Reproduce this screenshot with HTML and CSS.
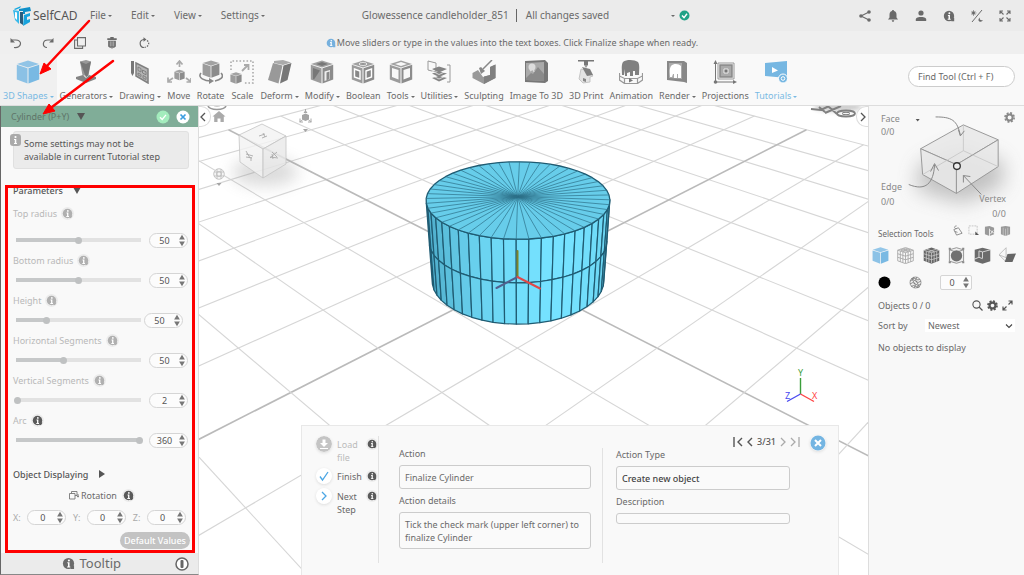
FILE: index.html
```html
<!DOCTYPE html>
<html lang="en">
<head>
<meta charset="utf-8">
<meta name="viewport" content="width=device-width, initial-scale=1">
<title>SelfCAD</title>
<link rel="stylesheet" href="styles.css">
</head>
<body>
<svg class="defs" aria-hidden="true">
  <symbol id="info" viewBox="0 0 10 10"><circle cx="5" cy="5" r="4.3" fill="currentColor"/><path d="M6 6.5h3.3v2.8H7z" fill="currentColor"/><circle cx="5.3" cy="2.7" r=".8" fill="#fff"/><path d="M4.1 4.1h1.7v3.2h.6v.8H3.9v-.8h.7V4.9h-.5z" fill="#fff"/></symbol>
  <symbol id="cube" viewBox="0 0 24 24"><path d="M12 .5 23 4 12 7.5 1 4z" fill="currentColor" opacity=".8"/><path d="M.8 4.8 11.5 8.2V23.5L.8 19.5z" fill="currentColor" opacity=".85"/><path d="M23.2 4.8 12.5 8.2V23.5l10.7-4z" fill="currentColor"/></symbol>
  <symbol id="spin" viewBox="0 0 6 13"><path d="M3 .8 5.900 5.500H.1zM3 12.200.1 7.500h5.800z" fill="#777"/></symbol>
</svg>
<div class="app">
  <header class="topbar">
    <div class="topbar-left">
      <a class="brand" href="#">
        <svg width="20" height="20" viewBox="0 0 20 20"><path d="M2 3 9 0 8 2 3 4z" fill="#1aa9e0"/><path d="M1 4 7 5 7 18 3 14z" fill="#39b9ea"/><path d="M3 6l2 .5V14l-2-2z" fill="#fff"/><path d="M7 3 18 1 19 5 13 6 13 8 11 8v-3L7 5z" fill="#0f8fc8"/><path d="M8 6h3v13l-3-2z" fill="#2a5d7d"/><path d="M12 9 18 7v3l-3 1v3l3-1v3l-7 4z" fill="#17a3dd"/></svg>
        <span>SelfCAD</span>
      </a>
      <nav class="menu">
        <button class="caret">File</button><button class="caret">Edit</button><button class="caret">View</button><button class="caret">Settings</button>
      </nav>
    </div>
    <div class="project">
      <span class="project-name">Glowessence candleholder_851</span>
      <span class="project-state">All changes saved</span>
      <button class="caret" aria-label="Save options"></button>
      <svg width="11" height="11" viewBox="0 0 11 11"><circle cx="5.500" cy="5.500" r="5" fill="#1fa287"/><path d="m3 5.600 2 2 3-3.800" fill="none" stroke="#fff" stroke-width="1.400"/></svg>
    </div>
    <div class="top-icons">
      <button aria-label="Share"><svg viewBox="0 0 12 12"><path d="M10 2 2 6l8 4" fill="none" stroke="currentColor" stroke-width="1.100"/><circle cx="10" cy="2" r="1.800" fill="currentColor"/><circle cx="2" cy="6" r="1.800" fill="currentColor"/><circle cx="10" cy="10" r="1.800" fill="currentColor"/></svg></button>
      <button aria-label="Notifications"><svg viewBox="0 0 12 12"><path d="M6 0c.7 0 1 .5 1 1 2 .5 2.500 2 2.500 4v2.500L11 9.500H1l1.500-2V5c0-2 .5-3.500 2.500-4 0-.5.300-1 1-1zM4.800 10.200h2.400c0 2-2.400 2-2.400 0z" fill="currentColor"/></svg></button>
      <button aria-label="Account"><svg viewBox="0 0 12 12"><circle cx="6" cy="3" r="2.600" fill="currentColor"/><path d="M.8 11V9.500C.8 7.500 4 7 6 7s5.200.5 5.200 2.500V11z" fill="currentColor"/></svg></button>
      <button aria-label="About"><svg><use href="#info"/></svg></button>
      <button aria-label="Theme"><svg viewBox="0 0 12 12"><path d="M11 0 1 12" stroke="currentColor" stroke-width="1"/><circle cx="2.500" cy="3" r="1.400" fill="currentColor"/><path d="M2.500 0v6M-.5 3h6M.4.9l4.200 4.200M4.600.9.4 5.100" stroke="currentColor" stroke-width=".6"/><path d="M9 7.500c-1 2 .8 3.300 2.800 2.500-.5 2.500-4.800 2-4.300-.5.200-1 .7-1.700 1.500-2z" fill="currentColor"/></svg></button>
      <button aria-label="Full screen"><svg viewBox="0 0 12 12"><path d="M1 4V1h3M8 1h3v3M11 8v3H8M4 11H1V8M1 1l3.500 3.500M11 1 7.500 4.500M11 11 7.500 7.500M1 11l3.500-3.500" fill="none" stroke="currentColor" stroke-width="1.100"/></svg></button>
    </div>
  </header>

  <div class="editbar">
    <div class="edit-icons">
      <button aria-label="Undo"><svg viewBox="0 0 12 12"><path d="M4 10.500c8 1 9-8 1-7.500H2" fill="none" stroke="currentColor" stroke-width="1.200"/><path d="M.5 1v4.500H5z" fill="currentColor"/></svg></button>
      <button aria-label="Redo"><svg viewBox="0 0 12 12"><path d="M5 10.500C0 10.500 0 3 6 3h4" fill="none" stroke="currentColor" stroke-width="1.200"/><path d="M11.500 1v4.500H7z" fill="currentColor"/></svg></button>
      <button aria-label="Copy"><svg viewBox="0 0 12 12"><path d="M3.500.6h8v8.400h-8zM3 3H.6v8.400h8V9.500" fill="none" stroke="currentColor" stroke-width="1.100"/></svg></button>
      <button aria-label="Delete"><svg viewBox="0 0 12 14"><path d="M4 0h4v1.500h3.500V3.500H.5V1.500H4zM1.500 4.500h9V11l-2 1.500h-5L1.500 11z" fill="currentColor"/><path d="M4 5v6M6 5v6M8 5v6" stroke="#eee" stroke-width=".6"/><path d="M5 13h2l-1 1z" fill="currentColor"/></svg></button>
      <button aria-label="Reset"><svg viewBox="0 0 12 12"><path d="M7.500 2.500h-2c-5 1-4 8 .5 8" fill="none" stroke="currentColor" stroke-width="1.200"/><path d="M5.500.2v4.600L8.500 2.500z" fill="currentColor"/><path d="M9 3.500c3 2 2 6-2.500 7" fill="none" stroke="currentColor" stroke-width="1.200" stroke-dasharray="1.500 1.300"/></svg></button>
    </div>
    <p class="hint"><svg class="info-blue" width="10" height="10"><use href="#info"/></svg>Move sliders or type in the values into the text boxes. Click Finalize shape when ready.</p>
  </div>

  <div class="toolbar">
    <div class="tools">
      <button class="tool active"><svg viewBox="0 0 24 24"><use href="#cube"/></svg><span class="caret">3D Shapes</span></button>
      <button class="tool"><svg viewBox="0 0 24 24"><path d="M6 1.500 12 0l5 1.500-2.500 14h-6z" fill="#999"/><path d="M6 1.500 12 4l5-2.500-3 14-2 2z" fill="#777"/><path d="m2 17 7-2 3 3 3-3 7 2v2l-10 4-10-4z" fill="#848484"/></svg><span class="caret">Generators</span></button>
      <button class="tool"><svg viewBox="0 0 24 24"><path d="M3 1h3v12l-1.500 3L3 13z" fill="#777"/><path d="m8 3 12 6v14L8 16z" fill="#b5b5b5" stroke="#808080" stroke-width="1.500"/><path d="m10 7 3 1.500V12l-3-1.500zM14.500 10l3.500 1.800v3l-3.500-1.800zM10 13l3 1.500v2L10 15zM15 15.500l3 1.500v2.500L15 18z" fill="none" stroke="#777" stroke-width=".8"/></svg><span class="caret">Drawing</span></button>
      <button class="tool"><svg viewBox="0 0 24 24"><svg x="7" y="9" width="11" height="12"><use href="#cube"/></svg><path d="M12.500 7V2M9.500 4.500l3-3.500 3 3.500M6 18l-4.500 3M1 17.500V22h4M19 18l4 3M19.500 22H24v-4" fill="none" stroke="#aaa" stroke-width="1.700"/></svg><span>Move</span></button>
      <button class="tool"><svg viewBox="0 0 24 24"><svg x="3" y="0" width="18" height="18"><use href="#cube"/></svg><path d="M2 13c-4 5 4 8 10 8M22 13c4 4-1 7-6 8" fill="none" stroke="#888" stroke-width="1.600"/><path d="m10 18 5 3-5 3z" fill="#888"/></svg><span>Rotate</span></button>
      <button class="tool"><svg viewBox="0 0 24 24"><path d="M1 10V1h22v22h-9" fill="none" stroke="#aaa" stroke-width="1.600" stroke-dasharray="1.600 1.900"/><svg x="0" y="12" width="12" height="12"><use href="#cube"/></svg><path d="m12 11 6-6M14 5h4.500v5" fill="none" stroke="#aaa" stroke-width="1.800"/></svg><span>Scale</span></button>
      <button class="tool"><svg viewBox="0 0 24 24"><path d="m6 1 9-1 8 2.500-8 2.500-9-2z" fill="#aaa"/><path d="m5 3 9.500 2.500-4 18L0 20z" fill="#999"/><path d="m15.500 5.500 8-2.500-4 17-7.500 3.500z" fill="#777"/></svg><span class="caret">Deform</span></button>
      <button class="tool"><svg viewBox="0 0 24 24"><use href="#cube"/><path d="m3 8 7 2.500-6 9-1-.5z" fill="#777"/><path d="m6 4 6-2 6 2-6 2z" fill="#777"/><path d="M14.500 11.500 20 10v9l-5.500 2z" fill="#eee"/><path d="m16.500 12.500 3-1v7.500l-3 1.500z" fill="#888"/></svg><span class="caret">Modify</span></button>
      <button class="tool"><svg viewBox="0 0 24 24"><use href="#cube"/><path d="m3.500 9 5.500 2v8l-5.500-2zM15 11l5.500-2v8L15 19z" fill="#888" stroke="#fff" stroke-width="1.400"/><ellipse cx="12" cy="4" rx="4" ry="1.400" fill="#888" stroke="#fff" stroke-width=".8"/></svg><span>Boolean</span></button>
      <button class="tool"><svg viewBox="0 0 24 24"><use href="#cube"/><path d="m3 8 6.500 2v9.500L3 17zM14.500 10 21 8v9l-6.500 2.500zM6 4l6-2 6 2-6 2z" fill="#f8f8f8"/></svg><span class="caret">Tools</span></button>
      <button class="tool"><svg viewBox="0 0 24 24"><path d="m1 1 8 2v9l-8-2zM20 5h3v17h-3" fill="none" stroke="#999" stroke-width="1"/><path d="m5 9 7-2.500 8 2.500-8 3.500zM5 13.500l7-2 8 2-8 3.500zM5 18l7-2 8 2-8 3.500z" fill="#858585"/><path d="m5 11 7 3.500 8-3.500M5 15.500l7 3.500 8-3.500" fill="none" stroke="#f8f8f8" stroke-width=".7"/></svg><span class="caret">Utilities</span></button>
      <button class="tool"><svg viewBox="0 0 24 24"><path d="M.5 13 6 10l5 7 7-2V7l5.500-2.500V18L12 24 .5 18z" fill="#999"/><path d="M12 16.500V24l11.500-6V4.500L18 7v8z" fill="#808080"/><path d="M20 0 11 9" stroke="#888" stroke-width="1.500"/><path d="m7 8 2-1 4 4-4 3z" fill="#888"/></svg><span>Sculpting</span></button>
      <button class="tool"><svg viewBox="0 0 24 24"><path d="m1 1 20-1 3 3v18l-3 2-20-1z" fill="#777"/><path d="m2 3 18-1v19L2 20z" fill="#aaa"/><circle cx="8" cy="7" r="3.500" fill="#ddd"/><path d="m2 18 5-5 2 1 5-7 6 7v7L2 20z" fill="#8a8a8a"/><path d="M6 11l4-3M10 12l-1-4" stroke="#ddd" stroke-width="1.200"/></svg><span>Image To 3D</span></button>
      <button class="tool"><svg viewBox="0 0 24 24"><path d="M4 0h16v1.500h-6V5h-4V1.500H4z" fill="#777"/><path d="M10 5h4l-2 3z" fill="#999"/><path d="m7 9 8 2 4 5-3 1v5l-7 1-4-4 1-5z" fill="#e4e4e4" stroke="#bbb" stroke-width=".8"/><path d="m8 7 8 2 3 6-6 1z" fill="#808080"/><path d="m9 18 3 1v3l-3-1z" fill="#888"/></svg><span>3D Print</span></button>
      <button class="tool"><svg viewBox="0 0 24 24"><path d="M4 2c4-3 12-2 15 0 2 3 1 8 1 12v1h-4v-4h-2v5h-3v-4l-3 1v3H6V9l-1 6H3c0-4-1-10 1-13z" fill="#808080"/><path d="M.5 13v7l5 3.500h13l5-3.500v-7M.5 16l5 2.500h13l5-2.500M5.500 18v5M18.500 18v5" fill="none" stroke="#999" stroke-width="1.200"/><path d="m10 18 4 2.500-4 2z" fill="#777"/></svg><span>Animation</span></button>
      <button class="tool"><svg viewBox="0 0 24 24"><path d="m2 1 17 0 3 2v20l-3-1L2 20z" fill="#888"/><path d="M4 3h13v16L4 18z" fill="#aaa"/><path d="M6 6c3-3 8-2 10 0v12h-3v-4h-1v4H9v-4H8l-1 3H5c0-4-1-8 1-11z" fill="#fff"/></svg><span class="caret">Render</span></button>
      <button class="tool"><svg viewBox="0 0 24 24"><path d="M2.500 23V2M1 22h21" stroke="#777" stroke-width="1"/><circle cx="2.500" cy="22" r="1.800" fill="#777"/><path d="m.5 4 2-4 2 4zM20 20l4 2-4 2z" fill="#777"/><path d="M5 3h16v16H5z" fill="none" stroke="#999"/><path d="M7 5h12v12H7z" fill="#aaa" stroke="#888" stroke-width="1.500"/><path d="M11 9h4v4h-4z" fill="#777" stroke="#fff" stroke-width=".8"/></svg><span>Projections</span></button>
      <button class="tool blue"><svg viewBox="0 0 24 24"><path d="m1 3 22-2v17L1 16z" fill="#76b7e2"/><path d="m8 7 6 3.500L8 13z" fill="#fff"/><circle cx="19" cy="18.500" r="4.500" fill="#76b7e2" stroke="#fff"/><circle cx="19" cy="18.500" r="1.800" fill="none" stroke="#fff"/></svg><span class="caret">Tutorials</span></button>
    </div>
    <input class="find" type="text" aria-label="Find tool" placeholder="Find Tool (Ctrl + F)">
  </div>

  <main class="work">
    <aside class="panel">
      <div class="panel-head">
        <h2>Cylinder (P+Y)</h2><span class="tri-down"></span>
        <button class="ok" aria-label="Finalize"><svg viewBox="0 0 14 14"><circle cx="7" cy="7" r="6.500" fill="#a3ecbd"/><path d="m4 7.200 2.200 2.300L10 4.800" fill="none" stroke="#fff" stroke-width="1.300"/></svg></button>
        <button class="cancel" aria-label="Cancel"><svg viewBox="0 0 14 14"><circle cx="7" cy="7" r="6.500" fill="#fff"/><path d="m4.500 4.500 5 5m0-5-5 5" stroke="#3c9ee0" stroke-width="1.700"/></svg></button>
      </div>
      <p class="notice"><svg class="notice-icon" width="11" height="12" viewBox="0 0 11 12"><rect width="11" height="12" rx="3" fill="#aaa"/><circle cx="5.500" cy="3" r="1.100" fill="#fff"/><path d="M4 5h2.300v4H7v1H4V9h.8V6H4z" fill="#fff"/></svg>Some settings may not be available in current Tutorial step</p>

      <h3 class="section">Parameters <span class="tri-down"></span></h3>
      <div class="param first"><label for="p1">Top radius</label><svg class="i" width="13" height="13"><use href="#info"/></svg></div>
      <div class="slide gap"><input id="p1" type="range" value="50" style="--fill:50%"><span class="num"><input type="text" aria-label="Top radius value" value="50"><svg><use href="#spin"/></svg></span></div>
      <div class="param"><label for="p2">Bottom radius</label><svg class="i" width="13" height="13"><use href="#info"/></svg></div>
      <div class="slide"><input id="p2" type="range" value="50" style="--fill:50%"><span class="num"><input type="text" aria-label="Bottom radius value" value="50"><svg><use href="#spin"/></svg></span></div>
      <div class="param"><label for="p3">Height</label><svg class="i" width="13" height="13"><use href="#info"/></svg></div>
      <div class="slide near"><input id="p3" type="range" value="24" style="--fill:24%"><span class="num"><input type="text" aria-label="Height value" value="50"><svg><use href="#spin"/></svg></span></div>
      <div class="param"><label for="p4">Horizontal Segments</label><svg class="i" width="13" height="13"><use href="#info"/></svg></div>
      <div class="slide"><input id="p4" type="range" value="38" style="--fill:38%"><span class="num"><input type="text" aria-label="Horizontal segments value" value="50"><svg><use href="#spin"/></svg></span></div>
      <div class="param"><label for="p5">Vertical Segments</label><svg class="i" width="13" height="13"><use href="#info"/></svg></div>
      <div class="slide"><input id="p5" type="range" value="0" style="--fill:0%"><span class="num"><input type="text" aria-label="Vertical segments value" value="2"><svg><use href="#spin"/></svg></span></div>
      <div class="param on"><label for="p6">Arc</label><svg class="i" width="13" height="13"><use href="#info"/></svg></div>
      <div class="slide"><input id="p6" type="range" value="100" style="--fill:100%"><span class="num"><input type="text" aria-label="Arc value" value="360"><svg><use href="#spin"/></svg></span></div>

      <h3 class="section display">Object Displaying <span class="tri-right"></span></h3>
      <div class="rotation"><svg width="10" height="10" viewBox="0 0 10 10"><path d="M.5 3.500h5.500v5.500H.5zM2.500 3.500V1.500H8v4H6M9 4v3M7.700 5.500 9 7.200l1-1.700" fill="none" stroke="#777" stroke-width=".9"/></svg><span>Rotation</span><svg class="i" width="13" height="13"><use href="#info"/></svg></div>
      <div class="xyz">
        <label for="rx">X:</label><span class="num"><input id="rx" type="text" value="0"><svg><use href="#spin"/></svg></span>
        <label for="ry">Y:</label><span class="num"><input id="ry" type="text" value="0"><svg><use href="#spin"/></svg></span>
        <label for="rz">Z:</label><span class="num"><input id="rz" type="text" value="0"><svg><use href="#spin"/></svg></span>
      </div>
      <button class="defaults">Default Values</button>
      <div class="tooltip-bar"><svg width="13" height="13"><use href="#info"/></svg><span>Tooltip</span>
        <button aria-label="Toggle tooltip"><svg viewBox="0 0 14 14"><circle cx="7" cy="7" r="6" fill="#fff" stroke="#666" stroke-width="1.500"/><rect x="5.500" y="3" width="3" height="8" rx="1" fill="#666"/></svg></button>
      </div>
      <div class="callout"></div>
    </aside>

    <section class="viewport" aria-label="3D view">
      <svg class="scene" viewBox="199 106 669 469" preserveAspectRatio="xMidYMin slice">
        <defs><filter id="soft" x="-50%" y="-50%" width="200%" height="200%"><feGaussianBlur stdDeviation="8"/></filter><filter id="faint" x="-50%" y="-50%" width="200%" height="200%"><feGaussianBlur stdDeviation="2"/></filter></defs>
        <g id="grid"></g>
        <ellipse cx="838" cy="107" rx="24" ry="5" fill="#777" opacity=".35" filter="url(#faint)"/>
        <path d="m811 109 10 1 8-4M819 107l6 5M841 106l-16 7M829 107l8 7" stroke="#808080" stroke-width="2" fill="none"/>
        <ellipse cx="846" cy="113.500" rx="9" ry="3" fill="none" stroke="#808080" stroke-width="1.800"/><ellipse cx="846" cy="113.500" rx="4" ry="1.200" fill="none" stroke="#808080"/>
        <ellipse cx="217" cy="105.500" rx="9" ry="4" fill="none" stroke="#999" stroke-width="1.500"/><path d="M209 103c4 4 12 4 16 0" fill="none" stroke="#999"/>
        <ellipse cx="265" cy="172" rx="33" ry="14" fill="#888" opacity=".3" filter="url(#soft)"/>
        <g stroke="#c4c4c4" stroke-width=".8" fill="#f3f3f3" fill-opacity=".8"><path d="m262 124 24 12-23 13-24-14z"/><path d="m239 135 24 14v29l-23-16z"/><path d="m286 136-23 13v29l23-14z" fill="#e9e9e9"/></g>
        <path d="m259 136 6-2m-3 4 5-2m-4-3 2 4M246 151l4 7m-4-1 6 1m-6-4 7 2m-2 1v4M270 158l7-6m-5 0 5 5m-7 0 8 1m-6-4 1 5" stroke="#aaa" stroke-width=".9"/>
        <path d="m219 111 6.500 5.500h-1.700V122h-3.300v-3.500h-3V122h-3.300v-5.500h-1.700z" fill="#aaa"/>
        <g fill="#a5a5a5"><path d="m305.500 110 2 3h-4zM302 115l3.500-1.500 3.500 1.500v4.500l-3.500 1.500-3.500-1.500z"/><path d="m299.500 122 3-2m9 2-3-2M305.500 109v4M300 118.500v3.500h3M311 118.500v3.500h-3" fill="none" stroke="#aaa"/><path d="M303 129h5l-2.500 3zM216.500 183h5l-2.500 3z"/></g>
        <g fill="none" stroke="#bbb" stroke-width=".8"><circle cx="219" cy="174" r="5.300" fill="#f5f5f5"/><path d="M214 172h10M214 176h10M217 169v10M221 169v10"/><circle cx="219" cy="174" r="2.500"/></g>
        <g id="cylinder"></g>
        <g fill="none" stroke-width="2" stroke-linecap="round"><path d="M517.500 277v-26" stroke="#7d8429"/><path d="m517.500 277-21 11" stroke="#51608f"/><path d="m517.500 277 22.500 11.500" stroke="#e04848"/></g>
        <g fill="none" stroke-width="1.400"><path d="M800.500 394v-16" stroke="#3b9e3b"/><path d="m800.500 394-13.500 7.500" stroke="#4a4af0"/><path d="m800.500 394 13.500 7.500" stroke="#f44"/></g>
        <g class="axis-text"><text x="798" y="376" fill="#3b9e3b">Y</text><text x="785" y="399" fill="#4a4af0">Z</text><text x="812" y="399" fill="#f44">X</text></g>
      </svg>
      <button class="collapse left" aria-label="Collapse left panel"><svg viewBox="0 0 6 10"><path d="M5 1 1 5l4 4" fill="none" stroke="#555" stroke-width="1.300"/></svg></button>
      <button class="collapse right" aria-label="Collapse right panel"><svg viewBox="0 0 6 10"><path d="m1 1 4 4-4 4" fill="none" stroke="#555" stroke-width="1.300"/></svg></button>

      <div class="tutorial">
        <div class="steps">
          <button class="step off"><svg class="disc" viewBox="0 0 16 16"><circle cx="8" cy="8" r="8" fill="#c4c4c4"/><path d="M6.500 3.500h3V7H12l-4 4-4-4h2.500zM4 12h8v1H4z" fill="#fff"/></svg><span>Load file</span><svg class="i" width="12" height="12"><use href="#info"/></svg></button>
          <button class="step"><svg class="disc" viewBox="0 0 16 16"><circle cx="8" cy="8" r="8" fill="#fff"/><path d="m4 8.500 2.500 3.500L12 4" fill="none" stroke="#4ba6e4" stroke-width="1.300"/></svg><span>Finish</span><svg class="i" width="12" height="12"><use href="#info"/></svg></button>
          <button class="step"><svg class="disc" viewBox="0 0 16 16"><circle cx="8" cy="8" r="8" fill="#fff"/><path d="m6 4 4 4-4 4" fill="none" stroke="#4ba6e4" stroke-width="1.300"/></svg><span>Next Step</span><svg class="i" width="12" height="12"><use href="#info"/></svg></button>
        </div>
        <div class="col-main">
          <label for="act">Action</label><input class="field" id="act" type="text" value="Finalize Cylinder" readonly>
          <label for="det">Action details</label><textarea class="field" id="det" rows="2" readonly>Tick the check mark (upper left corner) to finalize Cylinder</textarea>
        </div>
        <div class="col-side">
          <label for="typ">Action Type</label><input class="field strong" id="typ" type="text" value="Create new object" readonly>
          <label for="dsc">Description</label><input class="field thin" id="dsc" type="text" readonly>
        </div>
        <div class="pager">
          <button aria-label="First"><svg width="10" height="10" viewBox="0 0 10 10"><path d="M1 0v10M9 1 5 5l4 4" fill="none" stroke="#555" stroke-width="1.400"/></svg></button>
          <button aria-label="Previous"><svg width="6" height="10" viewBox="0 0 6 10"><path d="M5 1 1 5l4 4" fill="none" stroke="#555" stroke-width="1.400"/></svg></button>
          <span>3/31</span>
          <button aria-label="Next"><svg width="6" height="10" viewBox="0 0 6 10"><path d="m1 1 4 4-4 4" fill="none" stroke="#aaa" stroke-width="1.300"/></svg></button>
          <button aria-label="Last"><svg width="10" height="10" viewBox="0 0 10 10"><path d="M9 0v10M1 1l4 4-4 4" fill="none" stroke="#aaa" stroke-width="1.300"/></svg></button>
        </div>
        <button class="close" aria-label="Close"><svg viewBox="0 0 16 16"><circle cx="8" cy="8" r="7.500" fill="#74b5e2"/><path d="m5 5 6 6m0-6-6 6" stroke="#fff" stroke-width="2"/></svg></button>
      </div>
    </section>

    <aside class="side">
      <svg class="picker" viewBox="0 0 156 118" role="img" aria-label="Selection modes">
        <defs><filter id="sh" x="-50%" y="-50%" width="200%" height="200%"><feGaussianBlur stdDeviation="10"/></filter></defs>
        <path d="m50 60 40-20 45 15v25L95 98 48 85z" fill="#777" opacity=".42" filter="url(#sh)"/>
        <g fill="#e8e8e8" fill-opacity=".88" stroke="#999" stroke-width="1" stroke-linejoin="round"><path d="m52 43 43-24 35 15-42 25z"/><path d="m52 43 36 16v29L54 69z" /><path d="m130 34-42 25v29l42-27z"/></g>
        <path d="M95 19v26M54 69l41-24 35 16" stroke="#c4c4c4" fill="none" stroke-width=".8"/>
        <circle cx="88.500" cy="60.500" r="3.400" fill="#eee" stroke="#333" stroke-width="1.300"/>
        <g fill="none" stroke="#888" stroke-width="1"><path d="M67 11c16 0 22 3 25 19M90 24l2 6 4-5M40 79c17 7 25-1 26-20M62 66l4-8 4 7M113 89 95 70M95 77v-7l7 1"/></g>
        <path d="M47 13h4l-2 2.500z" fill="#555"/>
        <g class="pick-text"><text x="12" y="16">Face</text><text x="12" y="29">0/0</text><text x="12" y="85">Edge</text><text x="12" y="100">0/0</text><text x="111" y="97">Vertex</text><text x="124" y="112">0/0</text></g>
        <g transform="translate(141.500 11.500)"><circle r="3" fill="none" stroke="#888" stroke-width="2"/><circle r="4.600" fill="none" stroke="#888" stroke-width="1.600" stroke-dasharray="2 1.610"/></g>
      </svg>
      <div class="sel-head"><h3>Selection Tools</h3>
        <div class="sel-mini">
          <svg viewBox="0 0 12 12"><path d="M2 5 7 3l4 6-6 2zM5 1c-3 0-3 3 0 3M3 7l3 1" fill="none" stroke="#888"/></svg>
          <svg viewBox="0 0 12 12"><path d="M1 1h9v9H1z" fill="none" stroke="#aaa" stroke-width=".7" stroke-dasharray="2 1"/><path d="m8 7 4 4H8z" fill="#555"/></svg>
          <svg viewBox="0 0 12 12"><path d="m1 2 5-1 5 2v7l-5 2-5-2z" fill="#999"/><path d="M6 4v8M7 6l4 3m-4 1 3-4" stroke="#eee"/></svg>
          <svg viewBox="0 0 12 12"><path d="m1 2 5-1 5 1v8l-5 2-5-2z" fill="#999"/><path d="M3.500 3v8M6 4v8M8.500 3v8" stroke="#ddd" stroke-width=".6"/></svg>
        </div>
      </div>
      <div class="sel-tools">
        <button class="blue" aria-label="Solid"><svg><use href="#cube"/></svg></button>
        <button aria-label="Wireframe"><svg viewBox="0 0 24 24"><path d="M12 .8 23 4.500v15L12 23.500 1 19.500v-15zM1 4.500 12 8l11-3.500M12 8v15M4.700 6v15M8.300 7v15M15.700 7v15M19.300 6v15M1 9.500 12 13l11-3.500M1 14.500 12 18l11-3.500M5 3l11 3.700M9 2l10 3.500M19 3 8 6.700M15 2 5 5.500" fill="none" stroke="#aaa" stroke-width="1.300"/></svg></button>
        <button aria-label="Solid wireframe"><svg viewBox="0 0 24 24"><path d="M12 .8 23 4.500v15L12 23.500 1 19.500v-15z" fill="#666"/><path d="M1 4.500 12 8l11-3.500M12 8v15M4.700 6v15M8.300 7v15M15.700 7v15M19.300 6v15M1 9.500 12 13l11-3.500M1 14.500 12 18l11-3.500M5 3l11 3.700M19 3 8 6.700" fill="none" stroke="#ddd" stroke-width=".9"/></svg></button>
        <button aria-label="Through"><svg viewBox="0 0 24 24"><path d="M12 1 22 4v16l-10 3L2 20V4zM2 4l10 3 10-3" fill="#eee" stroke="#888" stroke-width="1.200"/><circle cx="12" cy="12.500" r="8" fill="#707070"/><path d="M1 1h3v3H1zM20 1h3v3h-3zM1 20h3v3H1zM20 20h3v3h-3z" fill="#888"/></svg></button>
        <button aria-label="Section"><svg viewBox="0 0 24 24"><path d="M12 1 23 4v16l-11 3.500L1 20V4z" fill="#6b6b6b"/><path d="m12 7 11-3M12 7v9M12 7 7 5.500v9L1 17M7 14.500l5 2" fill="none" stroke="#e5e5e5" stroke-width="1.200"/></svg></button>
        <button aria-label="Plane"><svg viewBox="0 0 24 24"><path d="M0 11 10 1v14zM0 11l9 9 5-1" fill="none" stroke="#aaa"/><path d="m12 10 12-1-5 12-11 0z" fill="#666"/></svg></button>
      </div>
      <div class="sel-opts">
        <button aria-label="Fill"><svg viewBox="0 0 13 13"><circle cx="6.500" cy="6.500" r="6" fill="#000"/></svg></button>
        <button aria-label="Mesh"><svg viewBox="0 0 13 13"><circle cx="6.500" cy="6.500" r="5.500" fill="#eee" stroke="#888" stroke-width=".8"/><path d="M1 5q3-3 5.500 0t5.500 0M1 8q3-3 5.500 0t5.500 0M2 3q3-2 5 0t4 0M2 10.500q3-2 5 0t4 0M5 1q-3 3 0 5.500t0 5.500M8 1q-3 3 0 5.500t0 5.500" fill="none" stroke="#777" stroke-width=".8"/></svg></button>
        <span class="num square"><input type="text" aria-label="Amount" value="0"><svg><use href="#spin"/></svg></span>
      </div>
      <div class="obj-head"><span>Objects 0 / 0</span>
        <button aria-label="Search"><svg viewBox="0 0 11 11"><circle cx="4.500" cy="4.500" r="3.600" fill="none" stroke="#555" stroke-width="1.100"/><path d="m7 7 3.500 3.500" stroke="#555" stroke-width="1.200"/></svg></button>
        <button aria-label="Settings"><svg viewBox="-5.500 -5.500 11 11"><circle r="2.900" fill="none" stroke="#555" stroke-width="2.200"/><circle r="4.500" fill="none" stroke="#555" stroke-width="1.700" stroke-dasharray="2 1.530"/></svg></button>
        <button aria-label="Expand"><svg viewBox="0 0 11 11"><path d="M6.500 1H10v3.500M10 1 6.500 4.500M1 6.500V10h3.500M1 10l3.500-3.500" fill="none" stroke="#555" stroke-width="1.200"/></svg></button>
      </div>
      <div class="sort"><label for="sort">Sort by</label><span class="select"><select id="sort"><option>Newest</option></select><svg viewBox="0 0 8 6"><path d="m1 1.500 3 3 3-3" fill="none" stroke="#444" stroke-width="1.100"/></svg></span></div>
      <p class="empty">No objects to display</p>
    </aside>
  </main>
  <svg class="arrows" width="130" height="130" viewBox="0 0 130 130" aria-hidden="true"><g stroke="#f00" stroke-width="2.500" fill="#f00"><path d="M89 21 46 67M113 61 52 107" stroke-linecap="round"/><path d="m40 74 4-11 7 6zM43 114l6-10 6 7z" stroke-width="1"/></g></svg>
</div>
<script src="scene.js"></script>
</body>
</html>
```
FILE: styles.css
```css
* { box-sizing: border-box; }
body { margin: 0; font: 9px/13px "Noto Sans", "Open Sans", sans-serif; color: #6a6a6a; background: #fff; }
button { border: 0; padding: 0; margin: 0; background: none; font: inherit; color: inherit; display: inline-flex; align-items: center; justify-content: center; cursor: pointer; }
input, select, textarea { font: inherit; color: inherit; margin: 0; }
h2, h3, p { margin: 0; font: inherit; }
svg { display: block; flex: none; }
.defs { position: absolute; width: 0; height: 0; }
.app { position: relative; min-height: 100vh; display: flex; flex-direction: column; overflow: hidden; }
.caret::after { content: ""; display: inline-block; margin-left: 2px; border: 2px solid transparent; border-top: 2px solid currentColor; border-bottom: 0; vertical-align: middle; }

.topbar { display: grid; grid-template-columns: 1fr auto 1fr; align-items: center; height: 31px; background: #ebebeb; font-size: 10px; }
.topbar-left, .menu, .project, .top-icons, .edit-icons, .hint { display: flex; align-items: center; }
.brand { display: flex; align-items: center; margin-left: 12px; gap: 1px; width: 78px; font-size: 12px; color: #555; text-decoration: none; }
.menu { gap: 19px; }
.project { padding-left: 28px; }
.project-name { padding-right: 7px; border-right: 1px solid #666; }
.project-state { margin-left: 9px; margin-right: 60px; }
.project svg { margin-left: 4px; }
.top-icons { justify-content: flex-end; gap: 16px; padding-right: 13px; }
.top-icons svg, .edit-icons svg { width: 12px; height: 12px; }

.editbar { display: grid; grid-template-columns: 1fr auto 1fr; align-items: center; height: 23px; background: #efefef; }
.edit-icons { gap: 20px; padding-left: 10px; }
.hint { gap: 1px; }
.info-blue { color: #76b0dd; }

.toolbar { display: flex; justify-content: space-between; align-items: center; height: 52px; padding-right: 9px; background: #f9f9f9; border-bottom: 1px solid #ddd; }
.tools { display: flex; align-self: stretch; }
.tool { flex-direction: column; gap: 5px; padding: 3px 3px 0; color: #6a6a6a; white-space: nowrap; }
.tool svg { color: #8c8c8c; }
.tool > svg { width: 24px; height: 24px; }
.tool.active { background: #f0f0f0; }
.tool.active, .tool.active svg, .tool.blue, .blue svg { color: #79b9e3; }
.find { width: 107px; height: 21px; margin-bottom: 6px; padding: 0 9px; border: 1px solid #ccc; border-radius: 11px; background: #fff; }
.find::placeholder { color: #6a6a6a; opacity: 1; }

.work { flex: 1; display: grid; grid-template-columns: 199px minmax(0, 1fr) 156px; }
.panel { position: relative; display: flex; flex-direction: column; background: #f9f9f9; border-left: 1px solid #666; border-right: 1px solid #ddd; border-bottom: 1px solid #888; }
.panel-head { display: flex; align-items: center; height: 21px; padding: 0 8px 0 10px; background: #80ad98; color: #5f7468; }
.panel-head button svg { width: 14px; height: 14px; }
.ok { margin-left: auto; }
.cancel { margin-left: 6px; }
.tri-down { display: inline-block; margin-left: 8px; border: 4px solid transparent; border-top: 7px solid #555; border-bottom: 0; }
.tri-right { display: inline-block; margin-left: 8px; border: 4px solid transparent; border-left: 6px solid #555; border-right: 0; }
.notice { position: relative; margin: 4px 9px 0 12px; padding: 5px 20px 5px 10px; border: 1px solid #e0e0e0; border-radius: 3px; background: #ebebeb; color: #555; }
.notice-icon { position: absolute; left: -4px; top: 2px; }
.section { margin: 12px 12px 0; height: 20px; line-height: 20px; font-weight: 500; color: #555; }
.param { display: flex; align-items: center; height: 20px; padding-left: 12px; gap: 4px; color: #b8b8b8; }
.i { padding: 1px; border-radius: 50%; background: #ececec; color: #b0b0b0; }
.param.on .i, .rotation .i, .step .i { color: #5a5a5a; }
.param.first { margin-top: 2px; }
.slide { display: flex; align-items: center; justify-content: space-between; height: 20px; padding: 0 10px 0 13px; }
.slide.gap { margin-top: 7px; }
.slide.near { padding-right: 15px; }
.slide input[type="range"] { appearance: none; width: 129px; height: 8px; background: linear-gradient(to right, #c6c8c9 var(--fill), #e2e2e2 var(--fill)) center / 125px 4px no-repeat; }
.slide input[type="range"]::-webkit-slider-thumb { appearance: none; width: 7px; height: 7px; border-radius: 50%; background: #bfc1c2; }
.num { position: relative; display: flex; align-items: center; width: 39px; height: 15px; flex: none; border: 1px solid #d5d5d5; border-radius: 8px; background: #fcfcfc; color: #555; }
.slide .num { margin-left: -10px; }
.num input { width: 100%; padding: 0 8px 0 0; border: 0; background: none; text-align: center; }
.num svg { position: absolute; right: 2px; top: 0; width: 6px; height: 13px; }
.section.display { margin-top: 15px; }
.rotation { display: flex; align-items: center; height: 20px; padding-left: 68px; gap: 2px; }
.rotation .i { margin-left: 3px; }
.xyz { display: flex; align-items: center; height: 20px; margin-top: 2px; padding: 0 12px; justify-content: space-between; color: #aaa; }
.defaults { align-self: flex-end; height: 17px; margin: 5px 8px 4px; padding: 0 4px; border-radius: 9px; background: #c3c3c3; color: #fff; font-weight: 500; }
.tooltip-bar { flex: 1; display: grid; grid-template-columns: auto auto auto; align-items: center; justify-content: end; background: #ebebeb; font-size: 13px; padding-right: 9px; }
.tooltip-bar span { padding: 0 54px 0 5px; }
.tooltip-bar button svg { width: 14px; height: 14px; }
.callout { position: absolute; left: 4px; right: 3px; top: 79px; bottom: 21px; border: 3px solid #f00; pointer-events: none; }
.arrows { position: absolute; left: 0; top: 0; pointer-events: none; }

.viewport { position: relative; overflow: hidden; background: #fff; }
.scene { position: absolute; width: 100%; height: 100%; }
.axis-text { font-size: 9px; }
.collapse { position: absolute; top: 0; width: 16px; height: 21px; background: #fff; border: 1px solid #ddd; }
.collapse svg { width: 6px; height: 10px; }
.collapse.left { left: 0; width: 12px; padding-right: 4px; border-left: 0; border-radius: 0 10px 10px 0; }
.collapse.right { right: 0; width: 12px; border-right: 0; border-radius: 10px 0 0 10px; }

.tutorial { position: absolute; left: 102px; right: 29px; bottom: 0; height: 150px; display: flex; background: #f9f9f9; border: 1px solid #e8e8e8; border-bottom: 0; }
.steps { width: 77px; margin: 10px 0 12px; padding-left: 14px; border-right: 1px solid #e2e2e2; display: flex; flex-direction: column; gap: 4px; }
.step { display: grid; grid-template-columns: 16px 28px 12px; column-gap: 5px; align-items: start; text-align: left; justify-content: start; }
.step span { padding-top: 2px; }
.step.off { color: #bbb; }
.step .i { margin-top: 2px; margin-left: -4px; }
.disc { width: 16px; height: 16px; border-radius: 50%; box-shadow: 0 1px 3px #ddd; }
.col-main { flex: 1; display: flex; flex-direction: column; margin: 21px 0 0; padding: 0 11px 0 20px; }
.col-side { width: 236px; display: flex; flex-direction: column; margin: 22px 0 12px; padding: 0 48px 0 13px; border-left: 1px solid #e2e2e2; }
.field { display: block; width: 100%; height: 24px; margin: 5px 0 5px; padding: 0 5px; border: 1px solid #ccc; border-radius: 3px; background: #fafafa; resize: none; }
textarea.field { height: 37px; padding: 5px; overflow: hidden; }
.field.strong { font-weight: 500; color: #444; }
.field.thin { height: 11px; }
.pager { position: absolute; right: 38px; top: 9px; display: flex; align-items: center; gap: 4px; font-weight: 500; color: #555; }
.close { position: absolute; right: 12px; top: 9px; border-radius: 50%; box-shadow: 0 1px 3px #ddd; }
.close svg { width: 16px; height: 16px; }

.side { background: #f8f8f8; border-left: 1px solid #ddd; display: flex; flex-direction: column; }
.picker { width: 100%; }
.pick-text { font-size: 9px; fill: #888; }
.sel-head { display: flex; align-items: center; justify-content: space-between; height: 20px; padding: 0 13px 0 9px; font-size: 8px; white-space: nowrap; }
.sel-mini { display: flex; gap: 5px; padding-bottom: 5px; }
.sel-mini svg { width: 11px; height: 11px; }
.sel-tools { display: flex; justify-content: space-between; padding: 4px 8px 0 3px; }
.sel-tools svg { width: 17px; height: 17px; color: #888; }
.sel-tools .blue svg { color: #79b9e3; }
.sel-opts { display: flex; align-items: center; gap: 18px; margin-top: 11px; padding-left: 9px; }
.sel-opts svg { width: 13px; height: 13px; }
.num.square { width: 32px; border-radius: 2px; }
.sel-opts .num svg { width: 6px; }
.obj-head { display: flex; align-items: center; gap: 4px; height: 20px; margin-top: 5px; padding: 0 11px 0 9px; }
.obj-head span { margin-right: auto; }
.obj-head svg { width: 11px; height: 11px; }
.sort { display: flex; align-items: center; justify-content: space-between; height: 20px; padding: 0 9px; }
.select { position: relative; width: 90px; background: #fff; }
.select select { width: 100%; height: 13px; appearance: none; border: 0; padding: 0 3px; background: none; }
.select svg { position: absolute; right: 2px; top: 4px; width: 8px; height: 6px; }
.empty { margin-top: 6px; padding-left: 9px; }
```
FILE: scene.js
```js
(function () {
  const NS = "http://www.w3.org/2000/svg";
  const CX = 517.5;

  function add(parent, tag, attrs) {
    const el = document.createElementNS(NS, tag);
    for (const k in attrs) el.setAttribute(k, attrs[k]);
    parent.appendChild(el);
  }

  // Perspective projection of a ground cell corner (i, j).
  function ground(i, j) {
    const r = i - j, d = i + j, w = 1 - 0.0665 * d;
    return [CX + 60.5 * r / w, (277 + 12.4 * d) / w];
  }

  const grid = document.getElementById("grid");
  const N = 7;
  function line(a, b, bold) {
    add(grid, "line", { x1: a[0], y1: a[1], x2: b[0], y2: b[1],
      stroke: bold ? "#bababa" : "#d6d6d6", "stroke-width": bold ? 1.6 : 1.1 });
  }
  for (let k = -N; k <= N; k++) {
    line(ground(k, -N), ground(k, N), k === 0);
    line(ground(-N, k), ground(N, k), k === 0);
  }

  // Rings of the cylinder, from the top cap down to the ground.
  const rings = [
    { y: 196.7, a: 91.5, b: 19.1, k: 0.098 },
    { y: 238, a: 88.5, b: 18.3, k: 0.094 },
    { y: 277, a: 85.5, b: 17.3, k: 0.092 }
  ];
  const SEG = 50;
  function point(ring, n) {
    const t = (n * 360 / SEG - 1) * Math.PI / 180;
    const w = 1 - ring.k * Math.cos(t);
    return [CX + 0.5 + ring.a * Math.sin(t) / w, (ring.y + ring.b * Math.cos(t)) / w];
  }
  const cyl = document.getElementById("cylinder");
  function poly(pts, fill, width) {
    add(cyl, "polygon", { points: pts.map(p => p.map(v => v.toFixed(1)).join()).join(" "),
      fill: fill, stroke: "#1f5b72", "stroke-width": width, "stroke-linejoin": "round" });
  }
  for (let s = 0; s < 2; s++) {
    for (let n = -SEG / 2; n < SEG / 2; n++) {
      const a = point(rings[s], n), b = point(rings[s], n + 1);
      const c = point(rings[s + 1], n + 1), d = point(rings[s + 1], n);
      const cross = (b[0] - a[0]) * (d[1] - a[1]) - (b[1] - a[1]) * (d[0] - a[0]);
      if (cross <= 0) continue;
      const lit = Math.cos((n - 3) * 2 * Math.PI / SEG);
      const mix = (lo, hi) => Math.round(lo + (hi - lo) * Math.max(0, lit));
      poly([a, b, c, d], `rgb(${mix(80, 117)},${mix(175, 226)},${mix(205, 255)})`, 1.2);
    }
  }
  const cap = [];
  for (let n = 0; n < SEG; n++) cap.push(point(rings[0], n));
  poly(cap, "#67cdea", 1.3);
  for (const p of cap) {
    add(cyl, "line", { x1: CX + 0.2, y1: 196.7, x2: p[0], y2: p[1], stroke: "#2c7088", "stroke-width": 0.7 });
  }
})();
```
